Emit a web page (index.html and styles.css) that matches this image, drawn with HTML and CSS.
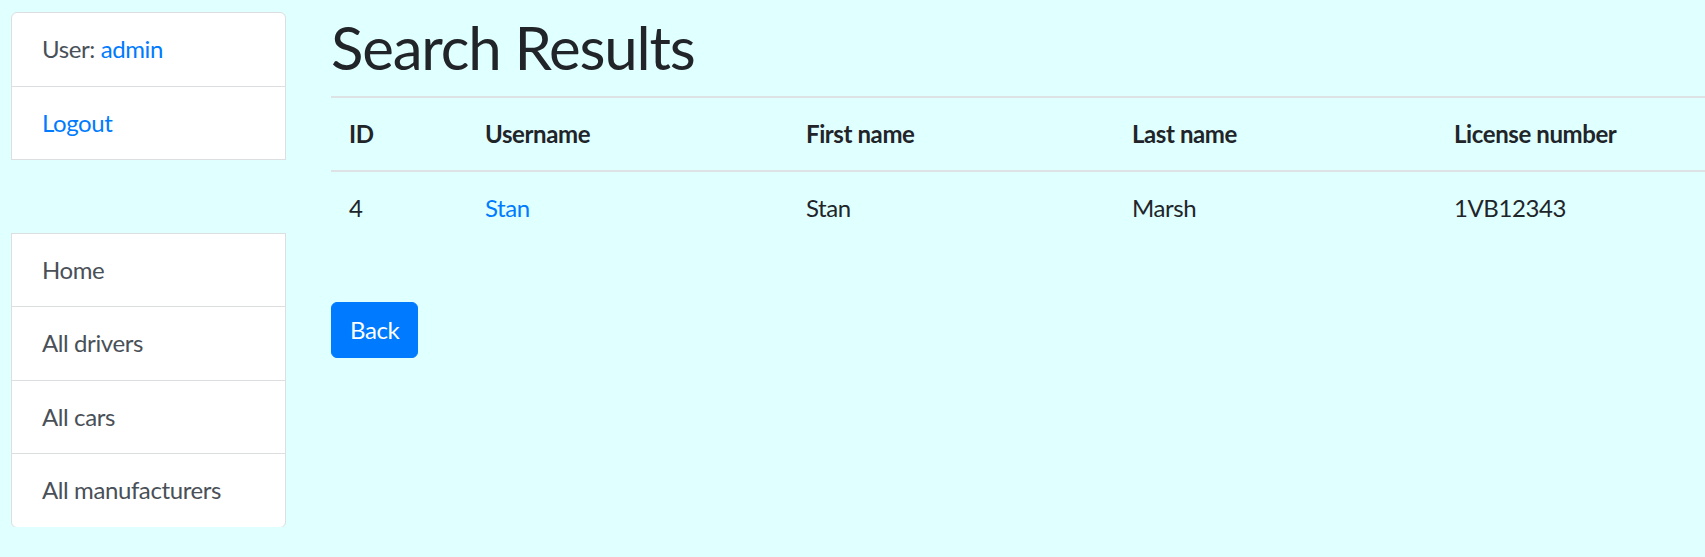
FILE: index.html
```html
<!DOCTYPE html>
<html lang="en">
<head>
<meta charset="utf-8">
<title>Search Results</title>
<link rel="stylesheet" href="styles.css">
</head>
<body>
<div class="page">
  <aside class="sidebar">
    <ul class="list">
      <li class="item first">User: <a href="#">admin</a></li>
      <li class="item"><a href="#">Logout</a></li>
      <li class="item spacer"></li>
      <li class="item nav">Home</li>
      <li class="item nav">All drivers</li>
      <li class="item nav">All cars</li>
      <li class="item nav last">All manufacturers</li>
    </ul>
  </aside>
  <main class="main">
    <h1 class="title">Search Results</h1>
    <table class="table">
      <thead>
        <tr>
          <th class="c-id">ID</th>
          <th class="c-user">Username</th>
          <th class="c-first">First name</th>
          <th class="c-last">Last name</th>
          <th class="c-lic">License number</th>
        </tr>
      </thead>
      <tbody>
        <tr>
          <td>4</td>
          <td><a href="#">Stan</a></td>
          <td>Stan</td>
          <td>Marsh</td>
          <td>1VB12343</td>
        </tr>
      </tbody>
    </table>
    <button class="btn">Back</button>
  </main>
</div>
</body>
</html>
```
FILE: styles.css
```css
html, body {
  margin: 0;
  padding: 0;
}
body {
  background: #e0ffff;
  font-family: Lato, "Open Sans", sans-serif;
  font-size: 24px;
  line-height: 36px;
  letter-spacing: -0.4px;
  color: #212529;
  overflow: hidden;
}
a {
  color: #007bff;
  text-decoration: none;
}
.page {
  display: flex;
  gap: 45px;
  padding: 12px 0 0 11px;
}
.sidebar {
  width: 275px;
  flex: none;
}
.list {
  list-style: none;
  margin: 0;
  padding: 0;
  display: flex;
  flex-direction: column;
}
.item {
  background: #fff;
  border: 1px solid #dcdfdf;
  padding: 18px 30px;
  line-height: 36.5px;
  margin-bottom: -1px;
  color: #495057;
}
.item.first {
  border-radius: 6px 6px 0 0;
}
.item.last {
  border-radius: 0 0 6px 6px;
}
.item.spacer {
  background: transparent;
  border-color: transparent;
  height: 36.5px;
  border-top-color: #dcdfdf;
}
.main {
  flex: 1;
  min-width: 0;
}
.title {
  font-size: 60px;
  font-weight: 400;
  line-height: 72px;
  margin: -1px 0 13px;
  letter-spacing: -1.2px;
}
.table {
  border-collapse: collapse;
  width: 1440px;
}
.table th,
.table td {
  text-align: left;
  padding: 18px;
  vertical-align: top;
}
.table th {
  font-weight: 700;
  border-top: 2px solid #dde3e5;
  border-bottom: 2px solid #dde3e5;
}
.c-id { width: 100px; }
.c-user { width: 285px; }
.c-first { width: 290px; }
.c-last { width: 286px; }
.btn {
  display: block;
  margin-top: 58px;
  font-family: inherit;
  font-size: 24px;
  line-height: 36px;
  letter-spacing: -0.4px;
  color: #fff;
  background: #007bff;
  border: 1px solid #007bff;
  border-radius: 6px;
  padding: 9px 18px;
}
```
